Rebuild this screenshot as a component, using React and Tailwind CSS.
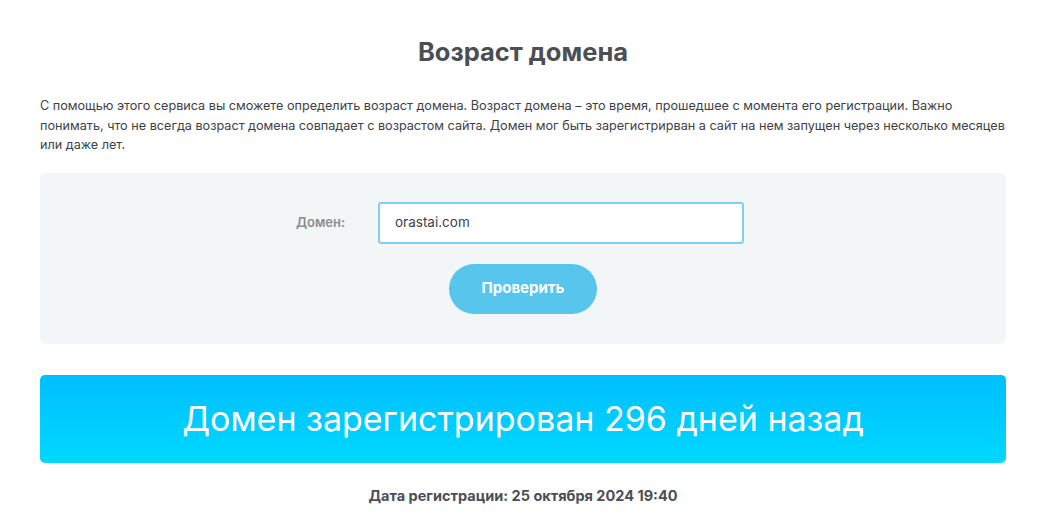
export default function App() {
  const font = { fontFamily: 'Inter, "Noto Sans", sans-serif' };
  return (
    <div className="w-[1044px] h-[532px] bg-white text-[#4a4f55] overflow-hidden" style={font}>
      <div className="pl-10 pr-[38px]">
        <h1 className="pt-[37px] text-center text-[25.5px] leading-[30px] font-bold text-[#4b4f54]">Возраст домена</h1>
        <p className="mt-[29px] text-[12.65px] leading-[19.5px] text-[#3d4146]">
          С помощью этого сервиса вы сможете определить возраст домена. Возраст домена – это время, прошедшее с момента его регистрации. Важно понимать, что не всегда возраст домена совпадает с возрастом сайта. Домен мог быть зарегистрирван а сайт на нем запущен через несколько месяцев или даже лет.
        </p>
        <div className="mt-[18px] h-[171px] rounded-[5px] bg-[#f3f6f7] flex flex-col items-center pt-[29px]">
          <div className="flex items-center ml-[-6px]">
            <label className="w-[82px] text-[13px] font-semibold text-[#8a8d90]">Домен:</label>
            <div className="w-[366px] h-[42px] rounded-[3px] border-2 border-[#7fd0f0] bg-white flex items-center px-[15px] text-[13.5px] text-[#3d4146]">orastai.com</div>
          </div>
          <button className="mt-[20px] w-[148px] h-[50px] rounded-full bg-[#57c5ec] text-white text-[15px] font-bold">Проверить</button>
        </div>
        <div className="mt-[31px] h-[88px] rounded-[5px] bg-gradient-to-b from-[#00bfff] to-[#00d8ff] flex items-center justify-center">
          <span className="text-white text-[34px] font-normal">Домен зарегистрирован 296 дней назад</span>
        </div>
        <div className="mt-[22px] text-center text-[14.5px] font-bold text-[#4b4f54]">Дата регистрации: 25 октября 2024 19:40</div>
      </div>
    </div>
  );
}
